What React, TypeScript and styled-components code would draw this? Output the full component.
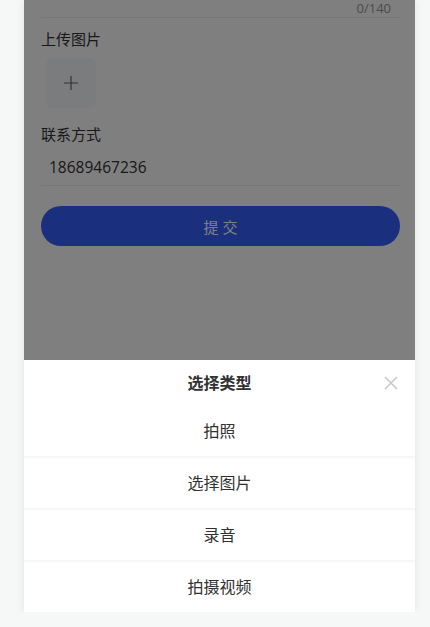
import * as React from "react";
import styled, { createGlobalStyle } from "styled-components";

const GlobalStyle = createGlobalStyle`
  html, body {
    margin: 0;
    padding: 0;
    background: #f6f7f7;
    font-family: "Open Sans", "Noto Sans CJK SC", sans-serif;
  }
`;

const Phone = styled.div`
  position: relative;
  width: 391px;
  height: 612px;
  margin-left: 24px;
  background: #ffffff;
  overflow: hidden;
  box-shadow: 0 0 8px rgba(0, 0, 0, 0.09);
`;

const Form = styled.div`
  display: flex;
  flex-direction: column;
  padding: 0 15px 0 17px;
`;

const WordCount = styled.div`
  height: 16px;
  padding: 1px 9px 0 0;
  text-align: right;
  font-size: 13px;
  line-height: 14px;
  color: #969799;
  border-bottom: 1px solid #ebedf0;
`;

const Label = styled.div<{ $top: number }>`
  margin-top: ${(p) => p.$top}px;
  font-size: 15px;
  line-height: 20px;
  color: #323233;
`;

const UploadBox = styled.div`
  display: flex;
  align-items: center;
  justify-content: center;
  width: 50px;
  height: 50px;
  margin: 9px 0 0 5px;
  background: #f7f8fa;
  border-radius: 6px;
`;

const PhoneField = styled.div`
  padding: 12px 0 7px 8px;
  font-size: 15.5px;
  line-height: 22px;
  color: #323233;
  border-bottom: 1px solid #ebedf0;
`;

const SubmitButton = styled.button`
  margin-top: 20px;
  height: 40px;
  border: none;
  border-radius: 20px;
  background: #3560fe;
  color: #ffffff;
  font-family: inherit;
  font-size: 15px;
`;

const Overlay = styled.div`
  position: absolute;
  inset: 0;
  background: rgba(0, 0, 0, 0.5);
`;

const Sheet = styled.div`
  position: absolute;
  left: 0;
  right: 0;
  bottom: 0;
  background: #ffffff;
`;

const SheetHeader = styled.div`
  position: relative;
  height: 46px;
  line-height: 46px;
  text-align: center;
  font-size: 16px;
  font-weight: 700;
  color: #323233;
`;

const CloseButton = styled.span`
  position: absolute;
  right: 17px;
  top: 16px;
  width: 14px;
  height: 14px;
  display: flex;
`;

const SheetItem = styled.div<{ $first?: boolean }>`
  height: 50px;
  line-height: 50px;
  text-align: center;
  font-size: 16px;
  color: #323233;
  border-top: ${(p) => (p.$first ? "none" : "2px solid #f5f6f7")};
`;

const actions = ["拍照", "选择图片", "录音", "拍摄视频"];

export default function App() {
  return (
    <>
      <GlobalStyle />
      <Phone>
        <Form>
          <WordCount>0/140</WordCount>
          <Label $top={11}>上传图片</Label>
          <UploadBox>
            <svg width="14" height="14" viewBox="0 0 14 14">
              <path d="M7 0v14M0 7h14" stroke="#646566" strokeWidth="1.2" />
            </svg>
          </UploadBox>
          <Label $top={16}>联系方式</Label>
          <PhoneField>18689467236</PhoneField>
          <SubmitButton>提 交</SubmitButton>
        </Form>
        <Overlay />
        <Sheet>
          <SheetHeader>
            选择类型
            <CloseButton>
              <svg width="14" height="14" viewBox="0 0 14 14">
                <path d="M1 1l12 12M13 1L1 13" stroke="#c8c9cc" strokeWidth="1.6" />
              </svg>
            </CloseButton>
          </SheetHeader>
          {actions.map((a, i) => (
            <SheetItem key={a} $first={i === 0}>
              {a}
            </SheetItem>
          ))}
        </Sheet>
      </Phone>
    </>
  );
}
